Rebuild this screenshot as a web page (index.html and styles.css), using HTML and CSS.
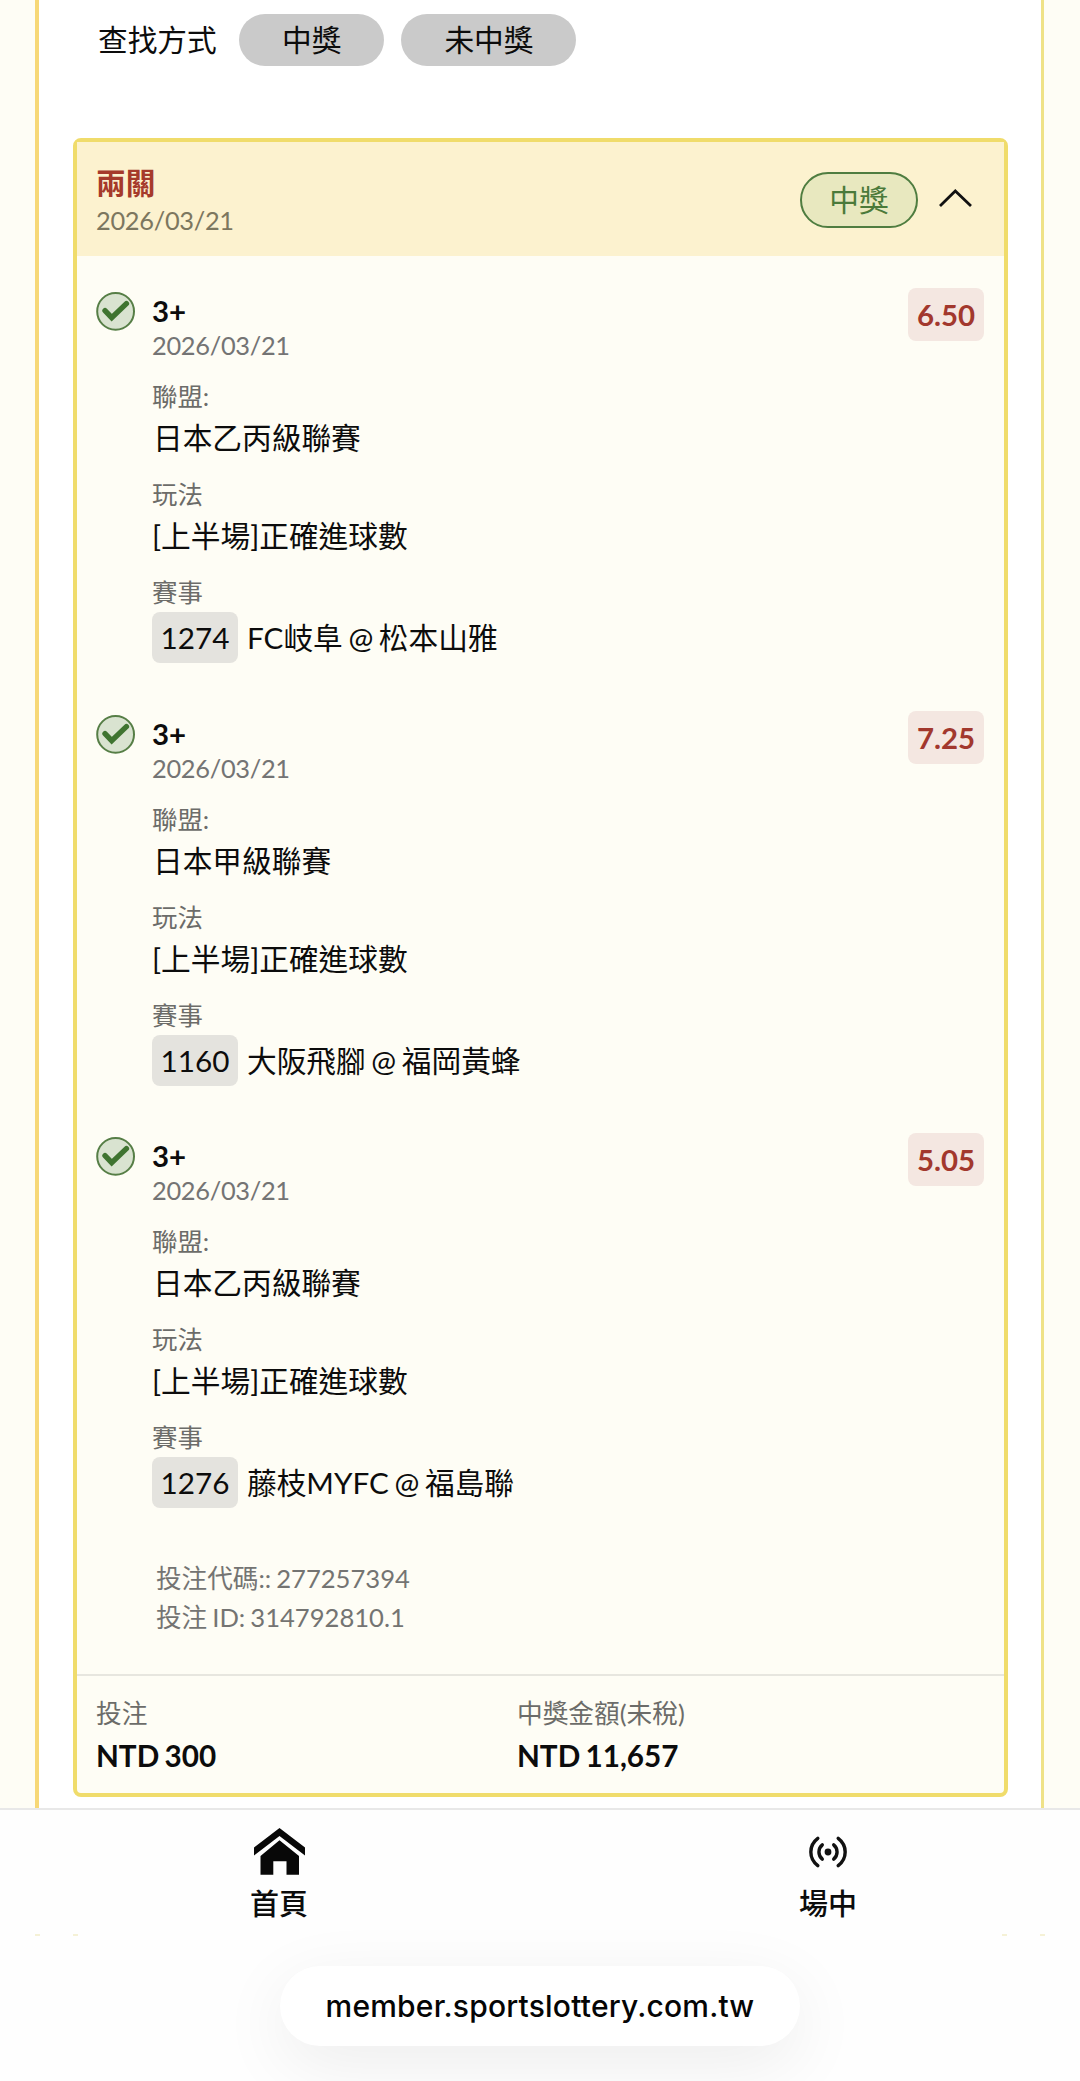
FILE: index.html
```html
<!DOCTYPE html>
<html lang="zh-Hant">
<head>
<meta charset="utf-8">
<title>投注紀錄</title>
<link rel="stylesheet" href="styles.css">
</head>
<body>
<svg class="defs" width="0" height="0" aria-hidden="true">
  <symbol id="check" viewBox="0 0 40 40">
    <circle cx="19.6" cy="20.4" r="18.4" fill="#d9e3d0" stroke="#567e46" stroke-width="2"/>
    <path d="M9 19.6 15.7 26.6 30.4 12.6" fill="none" stroke="#3f7430" stroke-width="5.4" stroke-linecap="round" stroke-linejoin="miter"/>
  </symbol>
</svg>
<main class="page">
  <div class="panel">
    <div class="filter">
      <span class="filter-label">查找方式</span>
      <button class="pill">中獎</button>
      <button class="pill">未中獎</button>
    </div>
    <section class="card">
      <header class="card-head">
        <div class="head-text">
          <h2>兩關</h2>
          <p>2026/03/21</p>
        </div>
        <span class="badge">中獎</span>
        <svg class="chevron" width="36" height="22" viewBox="0 0 36 22"><path d="M3 19 18.3 4 34 19" fill="none" stroke="#111" stroke-width="2.8"/></svg>
      </header>
      <div class="legs">
        <article class="leg">
          <svg class="tick"><use href="#check"/></svg>
          <div class="info">
            <h3>3+</h3>
            <p class="date">2026/03/21</p>
            <dl>
              <dt>聯盟:</dt><dd class="ideo">日本乙丙級聯賽</dd>
              <dt>玩法</dt><dd>[上半場]正確進球數</dd>
              <dt class="tight">賽事</dt><dd class="match"><span class="chip">1274</span><span>FC岐阜 @ 松本山雅</span></dd>
            </dl>
          </div>
          <span class="odds">6.50</span>
        </article>
        <article class="leg">
          <svg class="tick"><use href="#check"/></svg>
          <div class="info">
            <h3>3+</h3>
            <p class="date">2026/03/21</p>
            <dl>
              <dt>聯盟:</dt><dd class="ideo">日本甲級聯賽</dd>
              <dt>玩法</dt><dd>[上半場]正確進球數</dd>
              <dt class="tight">賽事</dt><dd class="match"><span class="chip">1160</span><span>大阪飛腳 @ 福岡黃蜂</span></dd>
            </dl>
          </div>
          <span class="odds">7.25</span>
        </article>
        <article class="leg">
          <svg class="tick"><use href="#check"/></svg>
          <div class="info">
            <h3>3+</h3>
            <p class="date">2026/03/21</p>
            <dl>
              <dt>聯盟:</dt><dd class="ideo">日本乙丙級聯賽</dd>
              <dt>玩法</dt><dd>[上半場]正確進球數</dd>
              <dt class="tight">賽事</dt><dd class="match"><span class="chip">1276</span><span>藤枝MYFC @ 福島聯</span></dd>
            </dl>
          </div>
          <span class="odds">5.05</span>
        </article>
      </div>
      <div class="ids">
        <p>投注代碼:: 277257394</p>
        <p>投注 ID: 314792810.1</p>
      </div>
      <footer class="totals">
        <div><span>投注</span><strong>NTD 300</strong></div>
        <div><span>中獎金額(未稅)</span><strong>NTD 11,657</strong></div>
      </footer>
    </section>
  </div>
</main>
<div class="bottom">
  <nav class="tabs">
    <a class="tab">
      <svg width="51" height="47" viewBox="0 0 51 47"><path d="M25.5 0 51 19.5V27.5L25.5 8 0 27.5V19.5ZM25.5 12.3 45 28V46.7H32.5V33.3H19.3V46.7H6.5V28Z" fill="#080808"/></svg>
      <span>首頁</span>
    </a>
    <a class="tab">
      <svg width="40" height="47" viewBox="0 -8 40 47"><g fill="none" stroke="#111" stroke-width="3.4" stroke-linecap="round"><path d="M9.8 2.4C.5 9.5.5 22.5 9.8 29.6M30.2 2.4C39.5 9.5 39.5 22.5 30.2 29.6M14.3 8.9C9.8 12.6 9.8 19.4 14.3 23.1M25.7 8.9C30.2 12.6 30.2 19.4 25.7 23.1"/></g><circle cx="20" cy="16" r="3.4" fill="#111"/></svg>
      <span>場中</span>
    </a>
  </nav>
  <div class="edges"><i></i><i></i><i></i><i></i></div>
  <div class="address">member.sportslottery.com.tw</div>
</div>
</body>
</html>
```
FILE: styles.css
```css
* { box-sizing: border-box; }
body, h2, h3, p, dl, dd { margin: 0; }
body {
  width: 1080px;
  height: 2081px;
  overflow: hidden;
  background: #fefefe;
  color: #0c0c0c;
  font: 29.7px/40px Lato, "Noto Sans CJK TC", sans-serif;
}
.defs { position: absolute; }
.page {
  height: 1808px;
  padding: 0 36px 0 35px;
  background: #fefdf5;
}
.panel {
  height: 100%;
  padding: 14px 33px 0 34px;
  background: #fff;
  border-left: 4px solid #f7d877;
  border-right: 3px solid #efe287;
}
.filter {
  display: flex;
  align-items: center;
  height: 52px;
  padding-left: 25px;
}
.filter-label { width: 141px; }
.pill {
  height: 52px;
  padding: 0 43px;
  margin-right: 17px;
  border: 0;
  border-radius: 26px;
  background: #cacaca;
  color: inherit;
  font: inherit;
}
.card {
  display: flex;
  flex-direction: column;
  width: 935px;
  height: 1659px;
  margin-top: 72px;
  border: 4px solid #f0dc6b;
  border-radius: 8px;
  background: #fefdf5;
}
.card-head {
  display: flex;
  align-items: center;
  height: 114px;
  padding: 0 31px 0 19px;
  background: #fcf2cf;
}
.head-text { flex: 1; padding-top: 1px; }
h2 { color: #a53a2b; font-size: 29.7px; line-height: 40px; font-weight: 700; }
.head-text p { color: #7c775f; font-size: 25.4px; line-height: 34px; letter-spacing: -0.3px; }
.badge {
  width: 118px;
  height: 56px;
  margin-top: 2px;
  border: 2px solid #4f7d40;
  border-radius: 28px;
  background: #e8e8bf;
  color: #4b7a3a;
  line-height: 51px;
  text-align: center;
}
.chevron { margin: -3px 0 0 19px; }
.legs {
  display: flex;
  flex-direction: column;
  gap: 46.5px;
  padding: 32px 20px 0 19px;
}
.leg { display: flex; height: 376px; align-items: flex-start; }
.tick { width: 40px; height: 40px; margin: 3px 16px 0 0; }
.info { flex: 1; padding-top: 5px; }
h3 { font-size: 29.4px; line-height: 36px; }
.date { color: #747474; font-size: 25.4px; line-height: 32px; letter-spacing: -0.3px; }
dl { padding-top: 18px; }
dt { margin-bottom: 5px; color: #6c6c69; font-size: 25.4px; line-height: 34px; }
dd { margin-bottom: 19px; }
.ideo { padding-left: 1px; }
.tight { margin-bottom: 3px; }
.match { display: flex; gap: 9px; margin: 0; line-height: 51px; word-spacing: -2px; }
.chip {
  width: 86px;
  height: 51px;
  border-radius: 8px;
  background: #e4e3de;
  line-height: 52px;
  text-align: center;
}
.odds {
  width: 76px;
  height: 53px;
  border-radius: 8px;
  background: #f4e7e1;
  color: #a2382d;
  font-size: 29.4px;
  font-weight: 700;
  line-height: 54px;
  text-align: center;
}
.ids {
  padding: 50px 0 0 79px;
  flex: 1;
  color: #747472;
  font-size: 25.6px;
  line-height: 38.5px;
  word-spacing: -1.5px;
}
.totals {
  display: grid;
  grid-template-columns: 421px 1fr;
  height: 119px;
  padding: 19px 19px 0;
  border-top: 2px solid #e7e6df;
}
.totals div { display: flex; flex-direction: column; }
.totals span { color: #6c6c69; font-size: 25.7px; line-height: 36px; }
.totals strong { line-height: 49px; word-spacing: -2px; }
.bottom {
  display: flex;
  flex-direction: column;
  align-items: center;
  height: 273px;
  overflow: hidden;
  border-top: 2px solid #e8e8e8;
}
.tabs { display: flex; width: 100%; height: 124px; padding-top: 18px; }
.tab {
  display: flex;
  flex: none;
  flex-direction: column;
  align-items: center;
  width: 550px;
  font-family: "Noto Sans CJK TC", sans-serif;
  font-size: 29px;
  font-weight: 500;
}
.tab:first-child { padding-left: 8px; }
.tab:last-child { width: 556px; }
.tab span { margin-top: 7px; line-height: 40px; }
.edges {
  display: flex;
  width: 1010px;
  height: 2px;
}
.edges i { width: 5px; height: 2px; background: #f5f1d6; }
.edges i:nth-child(2) { margin-left: 33px; }
.edges i:nth-child(3) { margin-left: auto; }
.edges i:nth-child(4) { margin-left: 33px; }
.address {
  width: 520px;
  height: 80px;
  margin-top: 30px;
  border-radius: 40px;
  background: #fff;
  box-shadow: 0 18px 70px rgba(0, 0, 0, .07);
  color: #050505;
  font: 500 30px/81px Inter, "Noto Sans CJK TC", sans-serif;
  letter-spacing: 0.2px;
  text-align: center;
}
```
